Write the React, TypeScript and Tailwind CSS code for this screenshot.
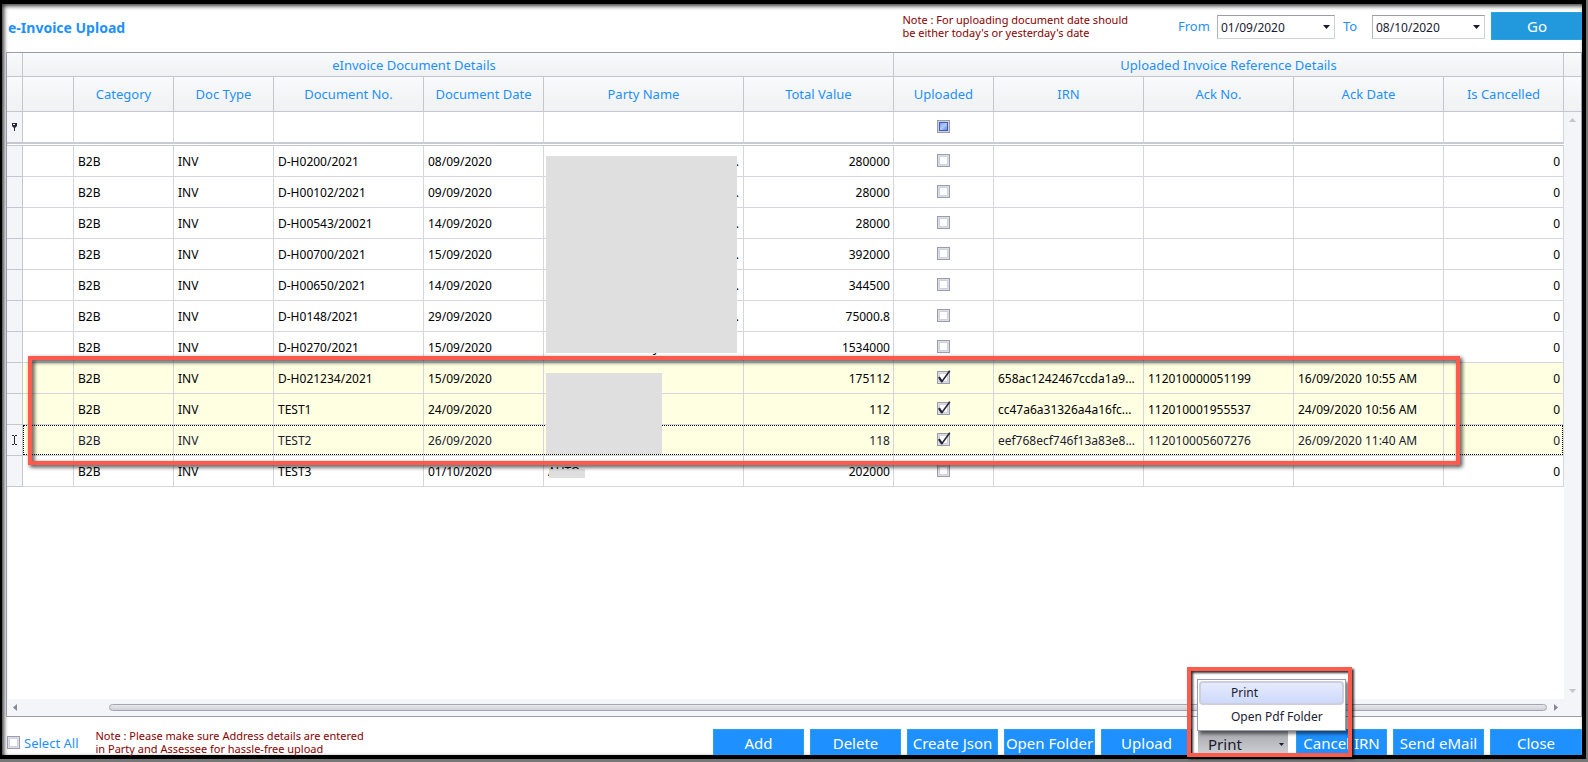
import { useState } from "react";

type Invoice = {
  docNo: string;
  date: string;
  total: string;
  uploaded?: boolean;
  focused?: boolean;
  irn?: string;
  ackNo?: string;
  ackDate?: string;
};

const invoices: Invoice[] = [
  { docNo: "D-H0200/2021", date: "08/09/2020", total: "280000" },
  { docNo: "D-H00102/2021", date: "09/09/2020", total: "28000" },
  { docNo: "D-H00543/20021", date: "14/09/2020", total: "28000" },
  { docNo: "D-H00700/2021", date: "15/09/2020", total: "392000" },
  { docNo: "D-H00650/2021", date: "14/09/2020", total: "344500" },
  { docNo: "D-H0148/2021", date: "29/09/2020", total: "75000.8" },
  { docNo: "D-H0270/2021", date: "15/09/2020", total: "1534000" },
  {
    docNo: "D-H021234/2021",
    date: "15/09/2020",
    total: "175112",
    uploaded: true,
    irn: "658ac1242467ccda1a9...",
    ackNo: "112010000051199",
    ackDate: "16/09/2020 10:55 AM",
  },
  {
    docNo: "TEST1",
    date: "24/09/2020",
    total: "112",
    uploaded: true,
    irn: "cc47a6a31326a4a16fc...",
    ackNo: "112010001955537",
    ackDate: "24/09/2020 10:56 AM",
  },
  {
    docNo: "TEST2",
    date: "26/09/2020",
    total: "118",
    uploaded: true,
    focused: true,
    irn: "eef768ecf746f13a83e8...",
    ackNo: "112010005607276",
    ackDate: "26/09/2020 11:40 AM",
  },
  { docNo: "TEST3", date: "01/10/2020", total: "202000" },
];

const headings = [
  "Category",
  "Doc Type",
  "Document No.",
  "Document Date",
  "Party Name",
  "Total Value",
  "Uploaded",
  "IRN",
  "Ack No.",
  "Ack Date",
  "Is Cancelled",
];

const headCell =
  "border-r border-b border-[#c5c7d0] bg-linear-to-b from-[#f9fafa] to-[#f0f1f3] p-0 text-center text-[13px] leading-5 font-normal text-[#1e90ff]";
const cell = "border-r border-b border-[#d5d6dc] pt-[2px] pr-[3px] pb-0 pl-1";
const boxCell = "border-r border-b border-[#d5d6dc] px-0 pt-0 pb-[2px]";
const rowHead = "border-r border-b border-[#c5c7d0] bg-[#f4f5f8] p-0";

function CheckBox({ label, id, defaultChecked }: { label: string; id?: string; defaultChecked?: boolean }) {
  const [checked, setChecked] = useState(!!defaultChecked);
  return (
    <span className="relative block size-[13px]">
      <input
        id={id}
        type="checkbox"
        aria-label={label}
        checked={checked}
        onChange={(e) => setChecked(e.target.checked)}
        className="block size-[13px] appearance-none border border-[#9a9cab] bg-white shadow-[inset_0_0_0_1px_#dcdee5,inset_0_0_0_2px_#cfd2dc]"
      />
      {checked && (
        <svg viewBox="0 0 15 15" className="pointer-events-none absolute -top-px left-0 size-[15px]" fill="none">
          <path d="M2 7.5 L5 11.5 L12.8 0.8" stroke="#26263a" strokeWidth="1.6" />
          <path d="M2 7 L5 12" stroke="#26263a" strokeWidth="2" />
        </svg>
      )}
    </span>
  );
}

function FilterBox() {
  return (
    <button
      type="button"
      role="checkbox"
      aria-checked="mixed"
      aria-label="Filter uploaded"
      className="block size-[13px] border border-[#9a9cab] bg-[#cfd2dc] p-px"
    >
      <span className="block size-[9px] border border-[#3f5fb5] bg-linear-to-br from-[#7fa2ec] via-[#b4cbfa] to-[#5f86df]" />
    </button>
  );
}

function DateSelect({ id, value, className }: { id: string; value: string; className: string }) {
  return (
    <div className={`relative ${className}`}>
      <select
        id={id}
        defaultValue={value}
        className="block h-6 w-full appearance-none border border-[#d0d2da] border-t-[#9a9cab] border-l-[#b0b2be] bg-white pt-[2px] pl-[3px] text-xs text-[#1a1a30] outline-none"
      >
        <option>{value}</option>
      </select>
      <svg viewBox="0 0 7 4" className="pointer-events-none absolute top-[10px] right-[5px] h-1 w-[7px]" fill="#1a1a30">
        <path d="M0 0h7L3.5 4z" />
      </svg>
    </div>
  );
}

function PartyCell({ index }: { index: number }) {
  return (
    <td className={`${cell} relative`}>
      {index < 6 && <span className="block pr-px text-right">.</span>}
      {index === 6 && <span className="block pl-[105px]">y</span>}
      {index === 10 && "AUTO"}
      {index === 0 && <div className="absolute top-[10px] right-[6px] left-[2px] z-10 h-[197px] bg-[#dfdfdf]" />}
      {index === 7 && <div className="absolute top-[10px] left-[2px] z-10 h-[81px] w-[116px] bg-[#dfdfdf]" />}
      {index === 10 && <div className="absolute top-[13px] left-[5px] z-10 h-[9px] w-9 bg-[#dfdfdf]" />}
    </td>
  );
}

function InvoiceRow({ row, index }: { row: Invoice; index: number }) {
  return (
    <tr className={`relative h-[31px] ${row.uploaded ? "bg-[#ffffe1]" : "bg-white"} ${row.focused ? "text-[#1a1a30]" : ""}`}>
      <td className={rowHead}>
        {row.focused && (
          <>
            <svg viewBox="0 0 7 10" className="mx-auto h-[10px] w-[7px]" fill="none" stroke="#26263a">
              <path d="M1 .5h2M4 .5h2M3.500 1v8M1 9.500h2M4 9.500h2" />
            </svg>
            <div className="pointer-events-none absolute top-0 right-px bottom-px left-4 border border-dotted border-black" />
          </>
        )}
      </td>
      <td className={cell} />
      <td className={cell}>B2B</td>
      <td className={cell}>INV</td>
      <td className={cell}>{row.docNo}</td>
      <td className={cell}>{row.date}</td>
      <PartyCell index={index} />
      <td className={`${cell} text-right`}>{row.total}</td>
      <td className={boxCell}>
        <div className="flex justify-center">
          <CheckBox label={`Uploaded ${row.docNo}`} defaultChecked={row.uploaded} />
        </div>
      </td>
      <td className={`${cell} whitespace-nowrap`}>{row.irn}</td>
      <td className={cell}>{row.ackNo}</td>
      <td className={`${cell} whitespace-nowrap`}>{row.ackDate}</td>
      <td className={`${cell} text-right`}>0</td>
    </tr>
  );
}

function InvoiceTable() {
  return (
    <table className="w-full table-fixed border-separate border-spacing-0 text-xs text-black">
      <colgroup>
        <col className="w-4" />
        <col className="w-[51px]" />
        <col className="w-[100px]" />
        <col className="w-[100px]" />
        <col className="w-[150px]" />
        <col className="w-[120px]" />
        <col />
        <col className="w-[150px]" />
        <col className="w-[100px]" />
        <col className="w-[150px]" />
        <col className="w-[150px]" />
        <col className="w-[150px]" />
        <col className="w-[120px]" />
      </colgroup>
      <thead>
        <tr className="h-6">
          <th className={headCell} />
          <th colSpan={7} className={headCell}>
            <span className="mr-[88px]">eInvoice Document Details</span>
          </th>
          <th colSpan={5} className={headCell}>Uploaded Invoice Reference Details</th>
        </tr>
        <tr className="h-[35px]">
          <th className={headCell} />
          <th className={headCell} />
          {headings.map((h) => (
            <th key={h} className={headCell}>{h}</th>
          ))}
        </tr>
      </thead>
      <tbody>
        <tr className="h-8">
          <td className={`${rowHead} border-b-2`}>
            <svg viewBox="0 0 5 8" className="mx-auto h-2 w-[5px]">
              <path d="M0 0h5v3L3 5v3H2V5L0 3z" fill="#26263a" />
              <path d="M1 1.500h2" stroke="#fff" />
            </svg>
          </td>
          {[...Array(12)].map((_, i) => (
            <td key={i} className={`${boxCell} border-b-2 border-b-[#c9cbd3]`}>
              {i === 7 && (
                <div className="flex justify-center">
                  <FilterBox />
                </div>
              )}
            </td>
          ))}
        </tr>
        <tr className="h-[2px]">
          <td colSpan={13} className="border-b border-[#c5c7d0] p-0" />
        </tr>
        {invoices.map((row, i) => (
          <InvoiceRow key={row.docNo} row={row} index={i} />
        ))}
      </tbody>
    </table>
  );
}

function VerticalScroll() {
  return (
    <div className="flex w-[17px] flex-col bg-[#f4f5f8]">
      <div className="h-6 border-b border-[#c5c7d0] bg-linear-to-b from-[#f9fafa] to-[#f0f1f3]" />
      <div className="h-[35px] border-b border-[#c5c7d0] bg-linear-to-b from-[#f9fafa] to-[#f0f1f3]" />
      <div className="flex flex-1 flex-col items-center justify-between py-[6px]">
        <svg viewBox="0 0 7 4" className="h-1 w-[7px]" fill="#c3c5cc">
          <path d="M0 4h7L3.500 0z" />
        </svg>
        <svg viewBox="0 0 7 4" className="h-1 w-[7px]" fill="#c3c5cc">
          <path d="M0 0h7L3.500 4z" />
        </svg>
      </div>
    </div>
  );
}

function HorizontalScroll() {
  return (
    <div className="flex h-[17px] items-center bg-[#f4f5f8] pr-[23px] pl-[6px]">
      <svg viewBox="0 0 4 7" className="h-[7px] w-1" fill="#85879a">
        <path d="M4 0v7L0 3.500z" />
      </svg>
      <div className="ml-[92px] h-[7px] flex-1 rounded-full border border-[#a3a5b2] bg-linear-to-b from-[#e6e7eb] to-[#cfd1d8]" />
      <svg viewBox="0 0 4 7" className="ml-[7px] h-[7px] w-1" fill="#85879a">
        <path d="M0 0v7l4-3.500z" />
      </svg>
    </div>
  );
}

function ActionButton({ label, width = "w-[91px]" }: { label: string; width?: string }) {
  return (
    <button
      type="button"
      className={`h-[26px] ${width} border border-b-0 border-[#2aa3e0] bg-[#1e90ff] text-center text-[15px] leading-6 whitespace-nowrap text-white`}
    >
      {label}
    </button>
  );
}

function PrintMenu() {
  return (
    <div className="relative mr-[2px] w-[90px]">
      <button
        type="button"
        aria-haspopup="menu"
        className="flex h-[26px] w-full items-center justify-between bg-linear-to-b from-[#a2a4aa] to-[#d0d1d5] pt-1 pr-1 pl-[10px] text-[15px] text-[#1a1a30]"
      >
        Print
        <svg viewBox="0 0 5 3" className="h-[3px] w-[5px]" fill="#1a1a30">
          <path d="M0 0h5L2.500 3z" />
        </svg>
      </button>
      <div
        role="menu"
        className="absolute bottom-6 -left-px z-20 w-[149px] border border-[#9a9cab] bg-white p-px text-xs text-[#1a1a30] shadow-[3px_3px_3px_rgba(0,0,0,0.5)]"
      >
        <button
          role="menuitem"
          type="button"
          className="block h-6 w-full rounded-sm border-2 border-[#cdd0dc] bg-linear-to-b from-[#e6ebfc] to-[#ced9fb] pl-[30px] text-left leading-5"
        >
          Print
        </button>
        <button role="menuitem" type="button" className="block h-6 w-full pl-8 text-left">
          Open Pdf Folder
        </button>
      </div>
      <div className="pointer-events-none absolute -top-[62px] -left-[11px] z-30 h-[90px] w-[165px] border-4 border-[#ff5a4b] drop-shadow-[2px_2px_1px_rgba(0,0,0,0.8)]" />
    </div>
  );
}

export default function App() {
  return (
    <div className="flex min-h-screen bg-[#777] pr-[2px] pb-[3px] font-['Noto_Sans','Open_Sans',sans-serif]">
      <main className="flex flex-1 flex-col border-4 border-l-2 border-black bg-white pl-1 shadow-[inset_2px_2px_4px_rgba(0,0,0,0.8)]">
        <header className="flex h-12 items-start">
          <h1 className="flex-1 pt-[14px] pl-[2px] text-sm leading-5 font-bold text-[#1e90ff]">e-Invoice Upload</h1>
          <p className="mt-[9px] mr-[50px] text-[11px] leading-[13px] text-[#8b0000]">
            Note : For uploading document date should
            <br />
            be either today's or yesterday's date
          </p>
          <label htmlFor="from" className="mt-3 w-[39px] text-[13px] leading-5 text-[#1e90ff]">From</label>
          <DateSelect id="from" value="01/09/2020" className="mt-[11px] w-[118px]" />
          <label htmlFor="to" className="mt-3 ml-2 w-[29px] text-[13px] leading-5 text-[#1e90ff]">To</label>
          <DateSelect id="to" value="08/10/2020" className="mt-[11px] mr-[6px] w-[113px]" />
          <button type="button" className="mt-2 h-7 w-[91px] border border-r-0 border-[#2aa3e0] bg-[#2299dd] text-[15px] text-white">
            Go
          </button>
        </header>

        <section className="relative flex flex-1 flex-col border border-[#9a9cab]">
          <div className="flex flex-1">
            <div className="flex-1">
              <InvoiceTable />
            </div>
            <VerticalScroll />
          </div>
          <HorizontalScroll />
          <div className="pointer-events-none absolute top-[303px] right-[121px] left-[21px] z-20 h-[109px] border-4 border-[#ff5a4b] drop-shadow-[2px_2px_2px_rgba(0,0,0,0.8)]" />
        </section>

        <footer className="flex h-[38px] items-end gap-[6px]">
          <div className="flex h-[26px] items-center gap-1 pl-px">
            <CheckBox id="select-all" label="Select All" />
            <label htmlFor="select-all" className="pt-[2px] text-[13px] leading-5 text-[#1e90ff]">Select All</label>
          </div>
          <p className="ml-[11px] flex-1 text-[11px] leading-[13px] text-[#8b0000]">
            Note : Please make sure Address details are entered
            <br />
            in Party and Assessee for hassle-free upload
          </p>
          <ActionButton label="Add" />
          <ActionButton label="Delete" />
          <ActionButton label="Create Json" />
          <ActionButton label="Open Folder" />
          <ActionButton label="Upload" />
          <PrintMenu />
          <ActionButton label="Cancel IRN" />
          <ActionButton label="Send eMail" />
          <ActionButton label="Close" width="w-[92px]" />
        </footer>
      </main>
    </div>
  );
}
